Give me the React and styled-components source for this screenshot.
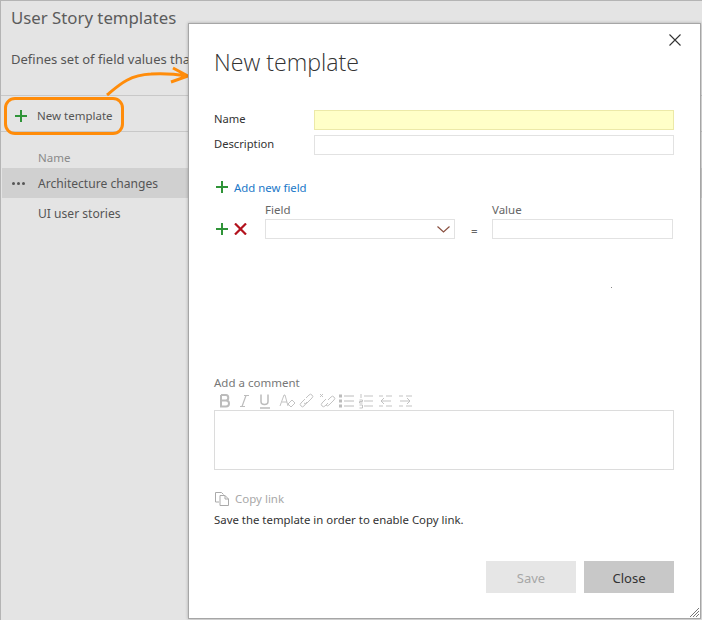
import React from 'react';
import styled, { createGlobalStyle } from 'styled-components';

const Global = createGlobalStyle`
  html, body { margin: 0; padding: 0; background: #fff; }
  body { font-family: "Noto Sans", "Open Sans", sans-serif; font-size: 12px; }
  * { box-sizing: border-box; }
`;
const Frame = styled.div`
  position: relative; width: 702px; height: 620px; overflow: hidden;
  background: #e4e4e4; border: 1px solid #b4b4b4; border-bottom: 0; border-right: 0;
`;
const Page = styled.div`display: flex; flex-direction: column; color: #555;`;
const Title = styled.h1`
  margin: 0; padding: 5px 0 0 10px; font-size: 16.8px; font-weight: 400; line-height: 24px; color: #5c5c5c;
`;
const Subtitle = styled.p`
  margin: 0; padding: 20px 0 1px 10px; font-size: 13px; line-height: 18px; color: #555; white-space: nowrap;
`;
const Toolbar = styled.div`
  margin-top: 26px; height: 37px; display: flex; align-items: center; gap: 10px; padding: 4px 0 0 14px;
  border-top: 1px solid #c8c8c8; border-bottom: 1px solid #c8c8c8; font-size: 11.5px; color: #555;
`;
const ColHead = styled.div`
  padding: 17px 0 0 37px; height: 36px; color: #8a8a8a; font-size: 11.5px; line-height: 18px;
`;
const Row = styled.div`
  height: 30px; margin-left: 1px; padding: 0 0 0 7px; display: flex; align-items: center; gap: 7px; font-size: 12.1px; color: #555;
  background: ${p => (p.$selected ? '#d0d0d0' : 'transparent')};
`;
const Dots = styled.span`width: 22px; display: flex; gap: 2px; justify-content: flex-start; padding-left: 3px;`;
const Dot = styled.i`width: 3px; height: 3px; border-radius: 50%; background: #555;`;

const Dialog = styled.div`
  position: absolute; left: 187px; top: 22px; width: 513px; height: 596px;
  background: #fff; border: 1px solid #a6a6a6; box-shadow: 0 0 3px rgba(0,0,0,.25);
  display: flex; flex-direction: column; padding: 0 25px; color: #333;
`;
const CloseX = styled.svg`position: absolute; top: 10px; right: 19px;`;
const Grip = styled.svg`position: absolute; right: 1px; bottom: 1px;`;
const DialogTitle = styled.h2`
  margin: 0; padding-top: 21px; font-family: "Open Sans", "Noto Sans", sans-serif; font-size: 23.2px; line-height: 34px; font-weight: 300; color: #333;
`;
const FormRow = styled.div`
  display: flex; align-items: center; height: 20px; margin-top: ${p => p.$mt}px; font-size: 11.2px; color: #333;
`;
const FormLabel = styled.label`width: 100px; padding-bottom: 4px;`;
const Input = styled.div`
  width: 360px; height: 20px; border: 1px solid ${p => (p.$hl ? '#ece9a8' : '#e2e2e2')};
  background: ${p => (p.$hl ? '#ffffc8' : '#fff')};
`;
const AddLink = styled.div`
  display: flex; align-items: center; gap: 6px; margin-top: 23px; height: 18px; color: #1a78c8; font-size: 11.4px; padding-left: 2px;
`;
const FieldGrid = styled.div`
  display: grid; grid-template-columns: 51px 190px 37px 181px; grid-template-rows: 15px 20px; row-gap: 2px; margin-top: 6px;
  font-size: 11.5px; color: #666; line-height: 15px;
`;
const GridHead = styled.span`grid-row: 1; grid-column: ${p => p.$col};`;
const Actions = styled.div`grid-row: 2; grid-column: 1; display: flex; align-items: center; gap: 6px; padding-left: 2px;`;
const Select = styled.div`
  grid-row: 2; grid-column: 2; border: 1px solid #e2e2e2; display: flex; align-items: center; justify-content: flex-end; padding-right: 4px;
`;
const Eq = styled.span`grid-row: 2; grid-column: 3; line-height: 24px; padding-left: 16px; color: #666;`;
const Value = styled.div`grid-row: 2; grid-column: 4; border: 1px solid #e2e2e2;`;
const Speck = styled.i`position: absolute; left: 422px; top: 263px; width: 1px; height: 1px; background: #888;`;
const CommentLabel = styled.div`
  margin-top: 136px; font-size: 11.5px; line-height: 16px; color: #777;
`;
const Tools = styled.div`display: flex; height: 19px; align-items: center; padding-left: 5px;`;
const Editor = styled.div`height: 60px; width: 460px; border: 1px solid #dcdcdc;`;
const CopyRow = styled.div`
  display: flex; align-items: center; gap: 5px; margin-top: 20px; height: 17px; font-size: 11.5px; color: #a8a8a8; padding-left: 1px;
`;
const Note = styled.div`margin-top: 5px; line-height: 16px; font-size: 11.4px; color: #333;`;
const Footer = styled.div`margin-top: 33px; display: flex; justify-content: flex-end; gap: 8px; width: 460px;`;
const Button = styled.div`
  width: 90px; height: 32px; padding-top: 2px; display: flex; align-items: center; justify-content: center; font-size: 13px;
  background: ${p => (p.$disabled ? '#e6e6e6' : '#c8c8c8')}; color: ${p => (p.$disabled ? '#a6a6a6' : '#333')};
`;
const Callout = styled.div`
  position: absolute; left: 3px; top: 96px; width: 120px; height: 38px; border: 3px solid #ff8c0a; border-radius: 11px;
`;
const ArrowSvg = styled.svg`position: absolute; left: 100px; top: 62px;`;

const Plus = ({ size = 12 }) => (
  <svg width={size} height={size} viewBox="0 0 12 12"><path d="M6 0v12M0 6h12" stroke="#2f9438" strokeWidth="2" fill="none" /></svg>
);
const Cross = () => (
  <svg width="13" height="12" viewBox="0 0 13 12"><path d="M1 .5l11 11M12 .5L1 11.5" stroke="#b3121d" strokeWidth="2.2" fill="none" /></svg>
);
const T = ({ children }) => <svg width="20" height="16" viewBox="0 0 20 16" fill="none" stroke="#bcbcbc">{children}</svg>;
const Toolbar2 = () => (
  <Tools>
    <T><path d="M2 2h5c3 0 3 5.500 0 5.500H2M7 7.500c4 0 4 6 0 6H2V2" strokeWidth="2" /></T>
    <T><path d="M3 13.500L7 2.500M5 2.500h5M1 13.500h5" strokeWidth="1.200" /></T>
    <T><path d="M2 1.500v7c0 4 7 4 7 0v-7M1 15h10" strokeWidth="1.500" /></T>
    <T><path d="M1 13L5 2h1l3 11M3 9h5M9 11l4-4 3 3-4 4z" strokeWidth=".9" /></T>
    <T><path d="M7 5l3-3a2 2 0 0 1 3 0 2 2 0 0 1 0 3l-5 5a2 2 0 0 1-3 0M8 9l-3 4a2 2 0 0 1-3 0 2 2 0 0 1 0-3l4-4" strokeWidth=".9" /></T>
    <T><path d="M9 7l3-3a2 2 0 0 1 3 0 2 2 0 0 1 0 3l-5 5a2 2 0 0 1-3 0M9 10l-3 3a2 2 0 0 1-3-3l4-4M1 1l3 3M4 1L1 4" strokeWidth=".9" /></T>
    <T><path d="M5 3h10M5 8h10M5 13h10" /><path d="M0 1.500h3v3H0zM0 6.500h3v3H0zM0 11.500h3v3H0z" fill="#bcbcbc" stroke="none" /></T>
    <T><path d="M5 3h9M5 8h9M5 13h9M2 1v4M.5 7h3v1.500H.5V10h3M.5 12h3v3H.5" strokeWidth=".9" /></T>
    <T><path d="M0 3h4M7 3h6M0 13h4M7 13h6M2 8h10M5 5L2 8l3 3" strokeWidth=".9" /></T>
    <T><path d="M0 3h4M7 3h6M0 13h4M7 13h6M1 8h10M8 5l3 3-3 3" strokeWidth=".9" /></T>
  </Tools>
);

export default function App() {
  return (
    <Frame>
      <Global />
      <Page>
        <Title>User Story templates</Title>
        <Subtitle>Defines set of field values that</Subtitle>
        <Toolbar><Plus />New template</Toolbar>
        <ColHead>Name</ColHead>
        <Row $selected><Dots><Dot /><Dot /><Dot /></Dots>Architecture changes</Row>
        <Row><Dots />UI user stories</Row>
      </Page>
      <Callout />
      <ArrowSvg width="90" height="36" viewBox="0 0 90 36" fill="none" stroke="#ff8c0a" strokeWidth="3">
        <path d="M6 32C18 22 28 12 50 11c14-1 24 0 37 2M72 5l15 8-17 6" />
      </ArrowSvg>
      <Dialog>
        <CloseX width="12" height="12" viewBox="0 0 12 12"><path d="M.5.5l11 11M11.500.5l-11 11" stroke="#333" strokeWidth="1.100" fill="none" /></CloseX>
        <DialogTitle>New template</DialogTitle>
        <FormRow $mt={31}><FormLabel>Name</FormLabel><Input $hl /></FormRow>
        <FormRow $mt={5}><FormLabel>Description</FormLabel><Input /></FormRow>
        <AddLink><Plus />Add new field</AddLink>
        <FieldGrid>
          <GridHead $col={2}>Field</GridHead>
          <GridHead $col={4}>Value</GridHead>
          <Actions><Plus /><Cross /></Actions>
          <Select>
            <svg width="13" height="7" viewBox="0 0 13 7"><path d="M.5.5l6 5.500 6-5.500" stroke="#8a5040" strokeWidth="1.200" fill="none" /></svg>
          </Select>
          <Eq>=</Eq>
          <Value />
        </FieldGrid>
        <Speck />
        <CommentLabel>Add a comment</CommentLabel>
        <Toolbar2 />
        <Editor />
        <CopyRow>
          <svg width="15" height="14" viewBox="0 0 15 14" fill="none" stroke="#aaa"><path d="M4 10H.5V.5h6l2 2M5 3.500h5l3.500 3.500v6.500H5zM10 3.500V7h3.500" /></svg>
          Copy link
        </CopyRow>
        <Note>Save the template in order to enable Copy link.</Note>
        <Footer><Button $disabled>Save</Button><Button>Close</Button></Footer>
        <Grip width="10" height="10" viewBox="0 0 10 10"><path d="M1 10l9-9M4 10l6-6M7 10l3-3" stroke="#777" fill="none" /></Grip>
      </Dialog>
    </Frame>
  );
}
